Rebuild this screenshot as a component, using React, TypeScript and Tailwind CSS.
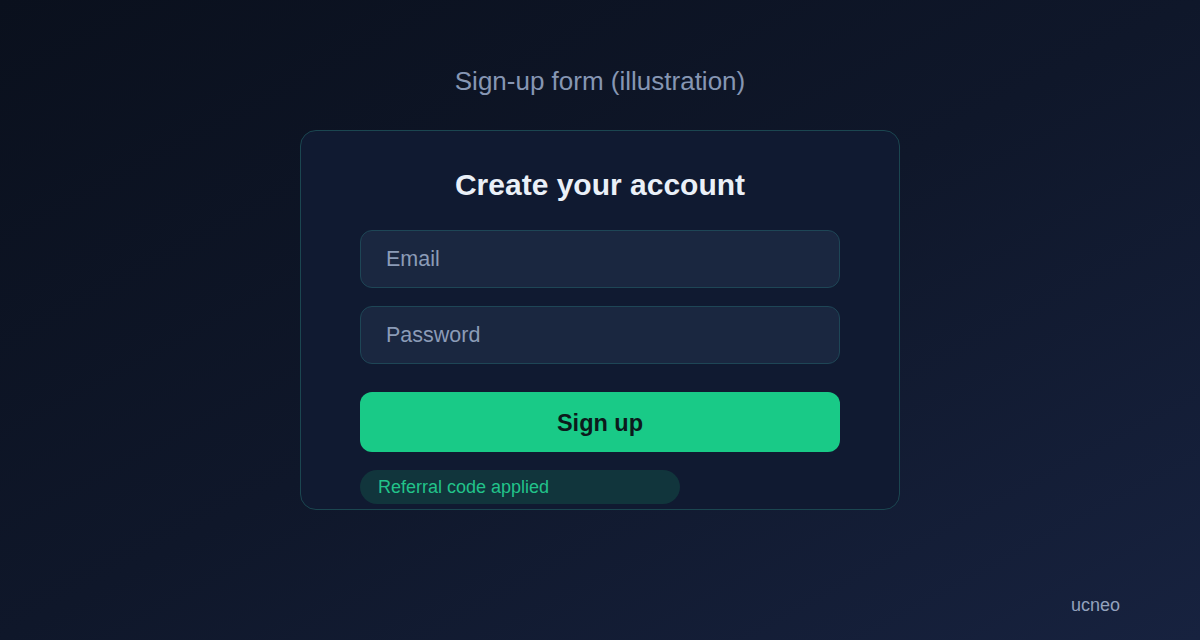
export default function App() {
  return (
    <div
      className="w-[1200px] h-[640px] flex flex-col items-center bg-linear-to-br from-[#0a101d] via-[#0f172a] to-[#17223f] relative"
      style={{ fontFamily: '"Liberation Sans", Arial, sans-serif' }}
    >
      <h1 className="mt-[66px] text-[26px] leading-[30px] text-[#8696b3]">Sign-up form (illustration)</h1>

      <div className="mt-[34px] w-[600px] h-[380px] rounded-[16px] border border-[#1b4650] bg-[#101a31] px-[59px] pt-[37px] flex flex-col">
        <h2 className="text-center text-[30px] leading-[34px] font-bold text-[#eaf0f8]">Create your account</h2>

        <div className="mt-[28px] flex flex-col gap-[18px]">
          <input
            placeholder="Email"
            className="h-[58px] w-full rounded-[12px] border border-[#1e4656] bg-[#1a2740] px-[25px] pt-[1px] text-[21.5px] text-[#e2e8f0] placeholder:text-[#8b9bb7] outline-none"
          />
          <input
            placeholder="Password"
            type="password"
            className="h-[58px] w-full rounded-[12px] border border-[#1e4656] bg-[#1a2740] px-[25px] pt-[1px] text-[21.5px] text-[#e2e8f0] placeholder:text-[#8b9bb7] outline-none"
          />
        </div>

        <button className="mt-[28px] h-[60px] w-full rounded-[12px] bg-[#19ca87] pt-[4px] text-[23.5px] font-bold text-[#0c1a1c]">
          Sign up
        </button>

        <div className="mt-[18px] h-[34px] w-[320px] rounded-full bg-[#11353c] px-[18px] flex items-center text-[18px] text-[#22c38a]">
          Referral code applied
        </div>
      </div>

      <div className="absolute right-[80px] bottom-[21px] text-[18px] text-[#93a2bd]">ucneo</div>
    </div>
  )
}
